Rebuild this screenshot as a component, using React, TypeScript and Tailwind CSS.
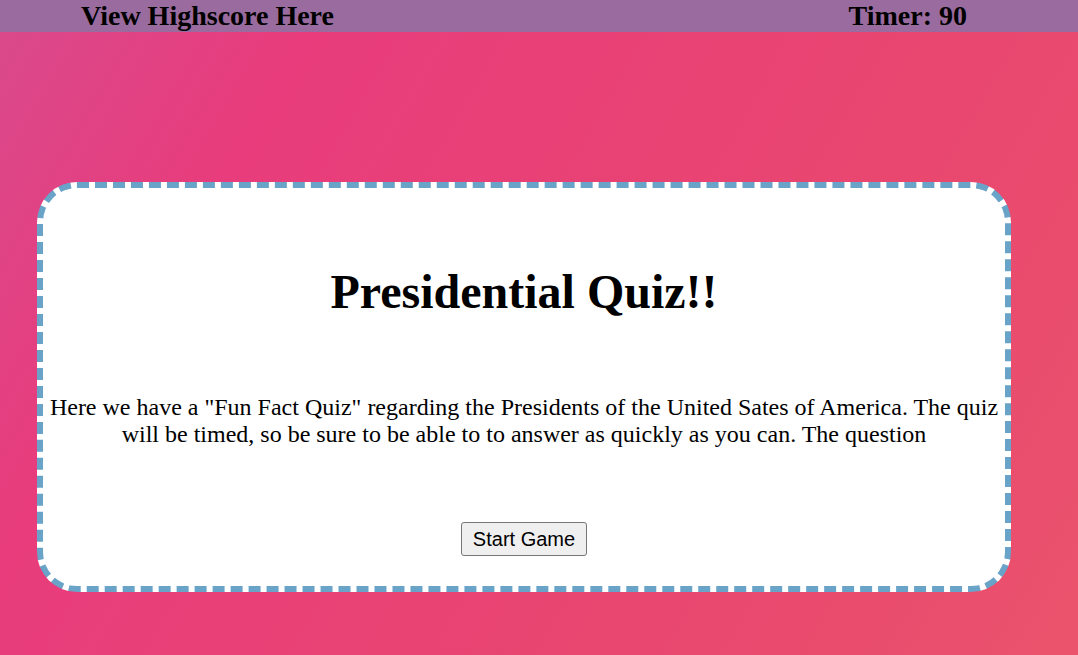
import React from 'react';

const App = () => {
  return (
    <div
      className="min-h-screen w-full flex flex-col bg-[linear-gradient(120deg,#d94a8c_0%,#e83c7c_22%,#e9476f_70%,#ea536c_100%)]"
      style={{ fontFamily: '"Liberation Serif", "Times New Roman", serif' }}
    >
      <header className="h-8 flex items-center justify-between bg-[#9a6b9e] pl-[81px] pr-[111px] text-black">
        <span className="text-[28px] font-bold leading-none">View Highscore Here</span>
        <span className="text-[28px] font-bold leading-none">Timer: 90</span>
      </header>

      <main className="flex-1 px-[37px] pt-[150px]">
        <div className="w-[974px] h-[410px] bg-white border-[6px] border-dashed border-[#6aa3c8] rounded-[40px] flex flex-col items-center pt-[74px]">
          <h1 className="text-5xl font-bold text-black leading-tight">Presidential Quiz!!</h1>
          <p className="mt-[72px] text-2xl leading-[27px] text-center text-black">
            Here we have a "Fun Fact Quiz" regarding the Presidents of the United Sates of America. The quiz
            will be timed, so be sure to be able to to answer as quickly as you can. The question
          </p>
          <button
            className="mt-[74px] px-[11px] py-[1px] bg-[#efefef] border border-[#767676] rounded-[3px] text-[20px] text-black"
            style={{ fontFamily: '"Liberation Sans", Arial, sans-serif' }}
          >
            Start Game
          </button>
        </div>
      </main>
    </div>
  );
};

export default App;
